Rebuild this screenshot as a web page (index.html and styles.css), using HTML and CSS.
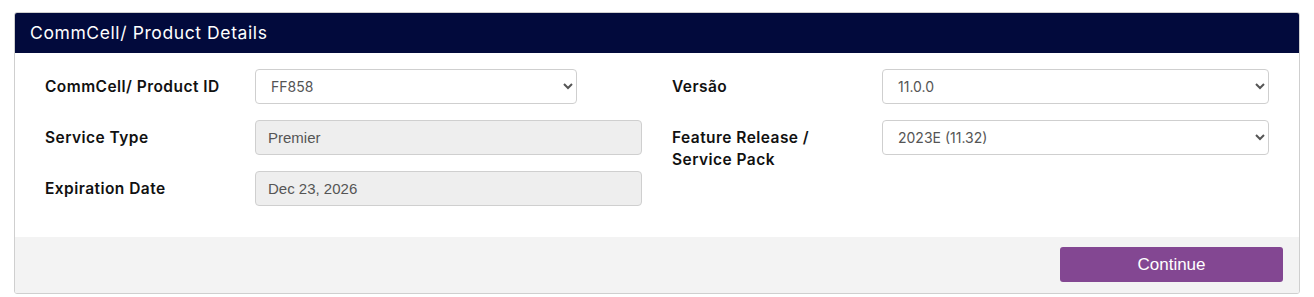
FILE: index.html
```html
<!DOCTYPE html>
<html lang="pt">
<head>
  <meta charset="UTF-8">
  <title>CommCell/ Product Details</title>
  <link rel="stylesheet" href="styles.css">
</head>
<body>
  <div class="card">
    <div class="card-header">CommCell/ Product Details</div>
    <div class="card-body">
      <div class="col">
        <div class="field-row">
          <label for="productId">CommCell/ Product ID</label>
          <select id="productId" class="control short">
            <option>FF858</option>
          </select>
        </div>
        <div class="field-row">
          <label for="serviceType">Service Type</label>
          <input id="serviceType" class="control plain" value="Premier" disabled>
        </div>
        <div class="field-row">
          <label for="expiration">Expiration Date</label>
          <input id="expiration" class="control plain" value="Dec 23, 2026" disabled>
        </div>
      </div>
      <div class="col">
        <div class="field-row">
          <label for="version">Versão</label>
          <select id="version" class="control">
            <option>11.0.0</option>
          </select>
        </div>
        <div class="field-row">
          <label for="release">Feature Release /<br>Service Pack</label>
          <select id="release" class="control">
            <option>2023E (11.32)</option>
          </select>
        </div>
      </div>
    </div>
    <div class="card-footer">
      <button class="btn-continue" type="button">Continue</button>
    </div>
  </div>
</body>
</html>
```

FILE: styles.css
```css
:root {
  --navy: #020a3c;
  --purple: #834792;
  --border: #cfcfcf;
  --label: #111;
  --field-text: #555;
}
body {
  margin: 0;
  padding: 12px 14px;
  background: #fff;
  font-family: 'Inter', 'Liberation Sans', Arial, sans-serif;
}
.card {
  border: 1px solid var(--border);
  border-radius: 3px;
  overflow: hidden;
}
.card-header {
  background: var(--navy);
  color: #fff;
  height: 40px;
  line-height: 40px;
  padding: 0 15px;
  font-size: 17.5px;
  font-weight: 400;
  letter-spacing: 0.6px;
}
.card-body {
  display: flex;
  padding: 16px 15px 31px;
}
.col {
  flex: 1;
  padding: 0 15px;
  display: flex;
  flex-direction: column;
  gap: 16px;
}
.field-row {
  display: flex;
  align-items: flex-start;
}
.field-row label {
  width: 210px;
  flex: none;
  padding-top: 7px;
  font-size: 15.5px;
  line-height: 22px;
  font-weight: 600;
  letter-spacing: 0.45px;
  color: var(--label);
}
.control {
  flex: 1;
  height: 35px;
  box-sizing: border-box;
  border: 1px solid var(--border);
  border-radius: 4px;
  background: #fff;
  color: var(--field-text);
  font-family: 'Inter', 'Liberation Sans', Arial, sans-serif;
  font-size: 14px;
  padding: 0 8px 0 12px;
  outline: none;
}
select.control {
  padding-left: 11px;
}
.control.short {
  flex: none;
  width: 322px;
}
.control.plain {
  background: #eee;
  font-family: 'Liberation Sans', Arial, sans-serif;
  font-size: 15px;
}
.card-footer {
  background: #f3f3f3;
  display: flex;
  justify-content: flex-end;
  padding: 10px 16px 11px;
}
.btn-continue {
  width: 223px;
  height: 35px;
  border: none;
  border-radius: 3px;
  background: var(--purple);
  color: #fff;
  font-family: 'Liberation Sans', Arial, sans-serif;
  font-size: 17px;
  cursor: pointer;
}
```
